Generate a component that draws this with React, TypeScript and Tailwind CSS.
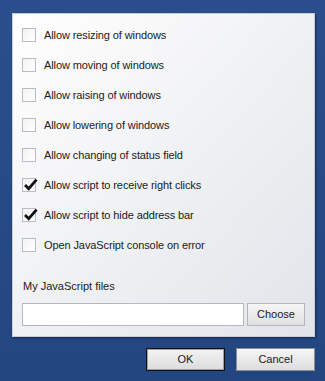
import { useState } from 'react';

const options = [
  { label: 'Allow resizing of windows', checked: false },
  { label: 'Allow moving of windows', checked: false },
  { label: 'Allow raising of windows', checked: false },
  { label: 'Allow lowering of windows', checked: false },
  { label: 'Allow changing of status field', checked: false },
  { label: 'Allow script to receive right clicks', checked: true },
  { label: 'Allow script to hide address bar', checked: true },
  { label: 'Open JavaScript console on error', checked: false },
];

function CheckRow({ label, checked, onToggle }: { label: string; checked: boolean; onToggle: () => void }) {
  return (
    <label className="flex h-[30px] items-center gap-[8px] cursor-default" onClick={onToggle}>
      <span className="relative flex h-[14px] w-[14px] items-center justify-center border border-[#b9bcc4] bg-gradient-to-br from-[#f2f2f2] to-white">
        {checked && (
          <svg viewBox="0 0 14 14" className="absolute -left-[1px] -top-[3px] h-[17px] w-[17px]">
            <path d="M2.5 7.5 L5.5 10.5 L12 3" fill="none" stroke="#111" strokeWidth="2.3" />
          </svg>
        )}
      </span>
      <span className="text-[11px] tracking-[-0.1px] text-[#1a1a1a]">{label}</span>
    </label>
  );
}

export default function App() {
  const [state, setState] = useState(options.map((o) => o.checked));

  function toggle(i: number) {
    setState((s) => s.map((v, j) => (j === i ? !v : v)));
  }

  return (
    <div
      className="flex h-[381px] w-[325px] flex-col bg-gradient-to-b from-[#2b4f8c] to-[#234680] pl-[12px] pr-[10px] pt-[13px]"
      style={{ fontFamily: '"Liberation Sans", Arial, sans-serif' }}
    >
      {/* Settings panel */}
      <div className="flex h-[324px] flex-col border border-[#c9ccd4] bg-gradient-to-br from-white via-[#f0f1f3] to-[#e2e4ea] px-[9px] pt-[6px] shadow-[1px_1px_2px_rgba(0,0,0,0.4)]">
        <div className="flex flex-col">
          {options.map((o, i) => (
            <CheckRow key={o.label} label={o.label} checked={state[i]} onToggle={() => toggle(i)} />
          ))}
        </div>

        <div className="mt-[18px] pl-[1px] text-[11px] text-[#1a1a1a]">My JavaScript files</div>

        <div className="mt-[8px] flex gap-[3px]">
          <input className="h-[23px] w-[222px] border border-[#b4b7be] bg-white outline-none" />
          <button className="h-[23px] w-[58px] border border-[#b4b7be] bg-gradient-to-b from-[#f6f6f6] to-[#e0e0e0] text-[11px] text-[#1a1a1a]">
            Choose
          </button>
        </div>
      </div>

      {/* Dialog buttons */}
      <div className="mt-[11px] flex justify-end gap-[11px]">
        <button className="h-[23px] w-[79px] border border-[#111] bg-gradient-to-b from-[#f4f4f4] to-[#dcdcdc] text-[11px] text-[#1a1a1a] shadow-[inset_0_0_0_1px_#9aa0aa]">
          OK
        </button>
        <button className="h-[23px] w-[79px] border border-[#8a9099] bg-gradient-to-b from-[#f6f6f6] to-[#dddddd] text-[11px] text-[#1a1a1a]">
          Cancel
        </button>
      </div>
    </div>
  );
}
